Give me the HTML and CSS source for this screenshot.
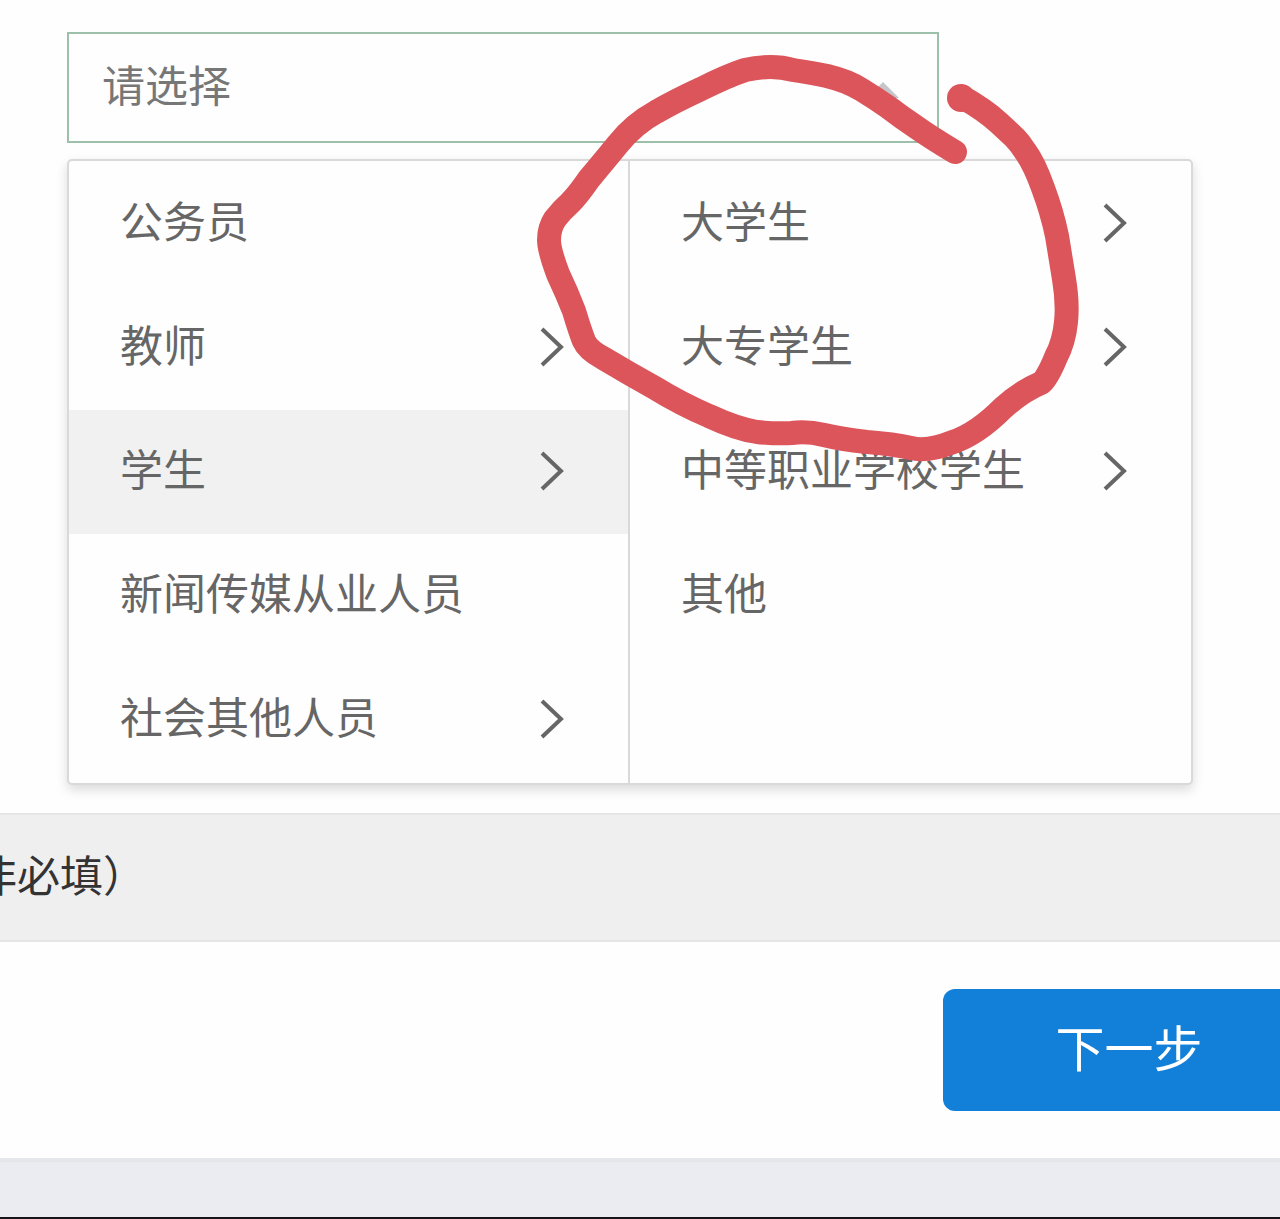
FILE: index.html
```html
<!DOCTYPE html>
<html lang="zh-CN">

	<head>
		<meta charset="UTF-8">
		<title>请选择</title>
		<link rel="stylesheet" href="styles.css">
	</head>

	<body>
		<div class="form">
			<div class="select">
				<input class="select-input" type="text" placeholder="请选择" aria-label="请选择" readonly>
				<svg class="caret" viewBox="0 0 32 16"><path d="M16 0L32 16H0z" /></svg>
			</div>
			<div class="menu">
				<ul class="menu-col">
					<li><button class="item" type="button">公务员</button></li>
					<li><button class="item" type="button">教师<svg class="arrow" viewBox="0 0 24 40"><path d="M2 2L21 20L2 38" /></svg></button></li>
					<li><button class="item active" type="button">学生<svg class="arrow" viewBox="0 0 24 40"><path d="M2 2L21 20L2 38" /></svg></button></li>
					<li><button class="item" type="button">新闻传媒从业人员</button></li>
					<li><button class="item" type="button">社会其他人员<svg class="arrow" viewBox="0 0 24 40"><path d="M2 2L21 20L2 38" /></svg></button></li>
				</ul>
				<ul class="menu-col">
					<li><button class="item" type="button">大学生<svg class="arrow" viewBox="0 0 24 40"><path d="M2 2L21 20L2 38" /></svg></button></li>
					<li><button class="item" type="button">大专学生<svg class="arrow" viewBox="0 0 24 40"><path d="M2 2L21 20L2 38" /></svg></button></li>
					<li><button class="item" type="button">中等职业学校学生<svg class="arrow" viewBox="0 0 24 40"><path d="M2 2L21 20L2 38" /></svg></button></li>
					<li><button class="item" type="button">其他</button></li>
				</ul>
			</div>
			<!-- 手绘红圈 -->
			<svg class="mark" width="1280" height="500" viewBox="0 0 1280 500">
				<circle cx="961" cy="98" r="14" />
				<path d="M962 97Q985 110 999 123T1015 138Q1020 143 1025 151Q1034 163 1043 188Q1052 212 1057 236Q1061 260 1064 279Q1068 303 1066 322Q1064 342 1056 357Q1047 379 1041 383Q1022 391 1003 408Q977 434 953 442Q928 452 911 448Q893 444 867 442Q840 439 824 435Q807 431 792 433Q777 434 757 432Q737 429 709 416Q681 404 655 388Q628 373 603 358Q588 350 584 341Q580 331 574 311Q567 293 558 274Q549 250 549 240Q549 228 555 219Q562 210 570 203Q578 195 589 179Q600 166 618 144Q634 124 656 112Q675 101 701 89Q727 76 745 70Q772 64 793 70Q813 73 827 76Q848 81 862 90Q875 98 888 107Q901 117 916 127Q930 137 955 152" />
			</svg>
		</div>
		<div class="title">
			<h2>非必填）</h2>
		</div>
		<div class="btns">
			<button class="next" type="button">下一步</button>
		</div>
		<div class="foot"></div>
	</body>

</html>
```

FILE: styles.css
```css
* {
	box-sizing: border-box;
}
body {
	margin: 0;
	min-height: 100vh;
	display: flex;
	flex-direction: column;
	background: #fefefe;
	font-family: "Noto Sans CJK SC", sans-serif;
	font-size: 43px;
	color: #666;
	overflow-x: hidden;
}
ul, h2 {
	margin: 0;
	padding: 0;
	list-style: none;
}
button, input {
	font: inherit;
	color: inherit;
}
.form {
	position: relative;
	padding: 32px 87px 28px 67px;
}
.select {
	position: relative;
	max-width: 872px;
}
.select-input {
	display: block;
	width: 100%;
	height: 111px;
	padding: 0 33px 10px;
	border: 2px solid #9dc0ab;
	background: #fefefe;
	outline: none;
}
.select-input::placeholder {
	color: #777;
	opacity: 1;
}
.caret {
	position: absolute;
	top: 50px;
	right: 40px;
	width: 32px;
	height: 16px;
	fill: #c4c6ca;
}
.menu {
	display: grid;
	grid-template-columns: 1fr 1fr;
	margin-top: 16px;
	border: 2px solid #d9d9d9;
	border-radius: 5px;
	background: #fefefe;
	box-shadow: 0 5px 12px rgba(0, 0, 0, .14);
}
.menu-col {
	padding: 1px 0;
}
.menu-col:first-child {
	border-right: 2px solid #d9d9d9;
}
.item {
	display: flex;
	align-items: center;
	justify-content: space-between;
	width: 100%;
	height: 124px;
	padding: 0 64px 10px 51px;
	border: none;
	background: none;
	cursor: pointer;
}
.item.active {
	background: #f1f1f1;
}
.arrow {
	width: 24px;
	height: 40px;
	margin-top: 8px;
	fill: none;
	stroke: #666;
	stroke-width: 4;
}
.mark {
	position: absolute;
	top: 0;
	left: 0;
	pointer-events: none;
}
.mark path {
	fill: none;
	stroke: #dc555a;
	stroke-width: 24;
	stroke-linecap: round;
	stroke-linejoin: round;
}
.mark circle {
	fill: #dc555a;
}
.title {
	height: 129px;
	border: solid #e5e5e5;
	border-width: 2px 0;
	background: #efefef;
	overflow: hidden;
}
.title h2 {
	margin-left: -26px;
	font-size: 43px;
	font-weight: normal;
	line-height: 116px;
	color: #333;
}
.btns {
	display: flex;
	justify-content: flex-end;
	padding: 47px 0;
	overflow: hidden;
}
.next {
	flex: none;
	width: 372px;
	height: 122px;
	margin-right: -35px;
	padding: 0 0 10px;
	border: none;
	border-radius: 12px;
	background: #127fd9;
	font-size: 49px;
	color: #fff;
}
.foot {
	flex: 1;
	min-height: 60px;
	border-top: 4px solid #e5e6e9;
	border-bottom: 2px solid #15151a;
	background: #ebecf1;
}
```
